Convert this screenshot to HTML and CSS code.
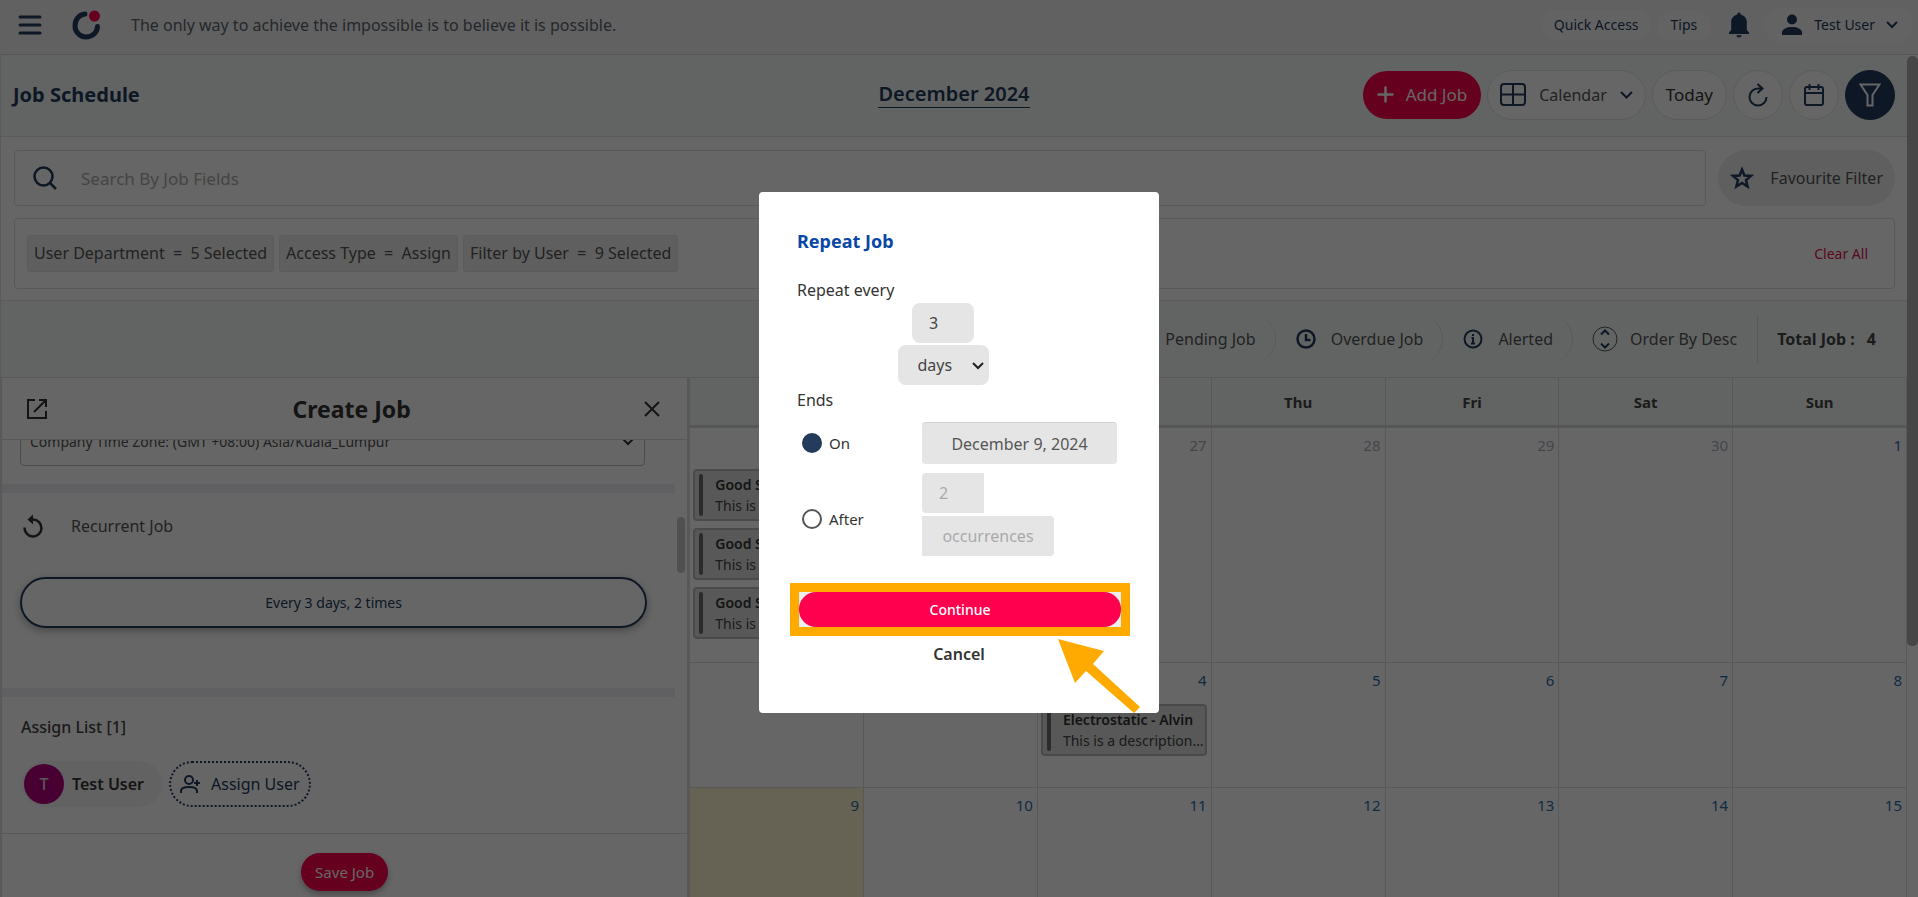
FILE: index.html
```html
<!DOCTYPE html>
<html lang="en">
<head>
<meta charset="utf-8">
<title>Job Schedule</title>
<link rel="stylesheet" href="styles.css">
</head>
<body>
<div class="app">
  <header class="topbar">
    <button class="icon-btn menu" aria-label="Menu"><svg width="24" height="20" viewBox="0 0 24 20" stroke="currentColor" stroke-width="3" stroke-linecap="round"><path d="M2 2h20M2 10h20M2 18h20"/></svg></button>
    <svg class="logo" width="32" height="32" viewBox="0 0 32 32" fill="none"><path d="M14 5C7.500 5.500 4 11 4 17a11 11 0 0 0 11 11c6 0 11-4 11.500-10.500" stroke="#243b5c" stroke-width="5" stroke-linecap="round"/><circle cx="23.500" cy="7" r="5.500" fill="#ff004f"/></svg>
    <p class="quote">The only way to achieve the impossible is to believe it is possible.</p>
    <nav class="topnav">
      <button class="pill">Quick Access</button>
      <button class="pill tips">Tips</button>
      <button class="icon-btn bell" aria-label="Notifications"><svg width="22" height="26" viewBox="0 0 22 26" fill="currentColor"><path d="M11 0.500c1.100 0 1.700.8 1.700 1.900C16 3.200 18.800 6 18.800 10v8l2.200 2.500v1.500H1V20.500L3.200 18V10c0-4 2.800-6.800 6.100-7.600C9.300 1.300 9.900.5 11 .5zM8.500 23.200h5c0 1.300-1.100 2.300-2.500 2.300s-2.500-1-2.500-2.300z"/></svg></button>
      <button class="pill user"><svg width="22" height="22" viewBox="0 0 22 22" fill="currentColor"><circle cx="11" cy="5.500" r="5"/><path d="M1 21v-2.500C1 15 6 13 11 13s10 2 10 5.500V21z"/></svg><span>Test User</span><svg width="12" height="8" viewBox="0 0 12 8" fill="none" stroke="currentColor" stroke-width="2"><path d="M1 1l5 5 5-5"/></svg></button>
    </nav>
  </header>

  <main class="page">
    <section class="titlebar">
      <h1>Job Schedule</h1>
      <button class="month">December 2024</button>
      <div class="actions">
        <button class="add"><svg width="17" height="17" viewBox="0 0 17 17" stroke="currentColor" stroke-width="2.500" stroke-linecap="round"><path d="M8.500 1.500v14M1.500 8.500h14"/></svg>Add Job</button>
        <button class="round view"><svg width="26" height="23" viewBox="0 0 26 23" fill="none" stroke="#243b5c" stroke-width="2"><rect x="1" y="1" width="24" height="21" rx="3"/><path d="M13 1v21M1 11.500h24"/></svg><span>Calendar</span><svg width="13" height="8" viewBox="0 0 13 8" fill="none" stroke="#243b5c" stroke-width="2"><path d="M1 1l5.500 5.500L12 1"/></svg></button>
        <button class="round today">Today</button>
        <button class="round circle" aria-label="Refresh"><svg width="20" height="24" viewBox="0 0 20 24" fill="none" stroke="#243b5c" stroke-width="2"><path d="M18.500 14A8.500 8.500 0 1 1 10 5.500h4M9.500 1l5 4.500-5 4.500"/></svg></button>
        <button class="round circle" aria-label="Pick date"><svg width="20" height="24" viewBox="0 0 20 24" fill="none" stroke="#243b5c" stroke-width="2"><rect x="1" y="4" width="18" height="18" rx="2"/><path d="M1 10h18M5.500 1v6M14.500 1v6"/></svg></button>
        <button class="round circle filter" aria-label="Filter"><svg width="22" height="24" viewBox="0 0 22 24" fill="none" stroke="currentColor" stroke-width="2"><path d="M1.500 1.500h19L13.500 12v10.500h-5V12z"/></svg></button>
      </div>
    </section>

    <section class="filters">
      <div class="search-row">
        <label class="search"><svg width="24" height="24" viewBox="0 0 24 24" fill="none" stroke="#243b5c" stroke-width="2.500"><circle cx="10.500" cy="10.500" r="9"/><path d="M17 17l6 6"/></svg><input type="text" placeholder="Search By Job Fields" aria-label="Search By Job Fields"></label>
        <button class="fav"><svg width="24" height="24" viewBox="0 0 24 24" fill="none" stroke="#243b5c" stroke-width="2.500"><path d="M12 3.500l2.400 6 6.600.4-5 4.200 1.600 6.400-5.600-3.500-5.600 3.500L8 14.100 3 9.900l6.600-.4z"/></svg>Favourite Filter</button>
      </div>
      <div class="chips">
        <span class="chip">User Department&nbsp; =&nbsp; 5 Selected</span>
        <span class="chip">Access Type&nbsp; =&nbsp; Assign</span>
        <span class="chip">Filter by User&nbsp; =&nbsp; 9 Selected</span>
        <button class="clear">Clear All</button>
      </div>
    </section>

    <section class="status">
      <span class="stat">Pending Job</span>
      <span class="stat"><svg width="20" height="20" viewBox="0 0 20 20" fill="none" stroke="#243b5c" stroke-width="2.500"><circle cx="10" cy="10" r="8.500"/><path d="M10 5v6h4.500"/></svg>Overdue Job</span>
      <span class="stat"><svg width="20" height="20" viewBox="0 0 20 20" fill="none" stroke="#243b5c" stroke-width="2"><circle cx="10" cy="10" r="8.500"/><path d="M10 5v2M8.500 9H10v5.500M8 14.500h4"/></svg>Alerted</span>
      <button class="order"><svg width="26" height="26" viewBox="0 0 26 26" fill="none" stroke="#243b5c"><circle cx="13" cy="13" r="12" stroke="#555"/><path d="M9 8.500l4-4 4 4M9 17.500l4 4 4-4" stroke-width="2"/></svg>Order By Desc</button>
      <strong class="total">Total Job :<span>4</span></strong>
    </section>

    <div class="board">
      <aside class="panel">
        <header class="panel-head">
          <button class="icon-btn" aria-label="Open in new window"><svg width="20" height="20" viewBox="0 0 20 20" fill="none" stroke="#333" stroke-width="2"><path d="M8 1H1v18h18v-7M12 1h7v7M19 1L7 13"/></svg></button>
          <h2>Create Job</h2>
          <button class="icon-btn" aria-label="Close"><svg width="16" height="16" viewBox="0 0 16 16" stroke="#333" stroke-width="2"><path d="M1 1l14 14M15 1L1 15"/></svg></button>
        </header>
        <div class="panel-scroll">
          <div class="panel-body">
            <button class="zone"><span>Company Time Zone: (GMT +08:00) Asia/Kuala_Lumpur</span><svg width="14" height="9" viewBox="0 0 14 9" fill="none" stroke="#333" stroke-width="2"><path d="M1 1l6 6 6-6"/></svg></button>
            <div class="band"></div>
            <div class="recur"><svg width="20" height="24" viewBox="0 0 20 24" fill="none" stroke="#333" stroke-width="2.500"><path d="M1.500 13.500A8.500 8.500 0 1 0 10 5.500"/><path d="M10 .5v10L4.500 5.500z" fill="#333" stroke="none"/></svg>Recurrent Job</div>
            <button class="repeat">Every 3 days, 2 times</button>
            <div class="band"></div>
            <h3>Assign List [1]</h3>
            <div class="people">
              <span class="person"><span class="avatar">T</span>Test User</span>
              <button class="assign"><svg width="20" height="18" viewBox="0 0 20 18" fill="none" stroke="#243b5c" stroke-width="2"><circle cx="9" cy="5" r="4"/><path d="M1 18v-2c0-3 3-4 8-4s8 1 8 4v2M17 5v6M14 8h6"/></svg>Assign User</button>
            </div>
          </div>
          <div class="panel-thumb"></div>
        </div>
        <footer class="panel-foot"><button class="save">Save Job</button></footer>
      </aside>

      <table class="calendar">
        <thead><tr><th>Mon</th><th>Tue</th><th>Wed</th><th>Thu</th><th>Fri</th><th>Sat</th><th>Sun</th></tr></thead>
        <tbody>
          <tr class="tall muted"><td><span class="day">25</span>
            <div class="job"><b>Good Service - Alvin</b><span>This is a description of the job</span></div>
            <div class="job"><b>Good Service - Alvin</b><span>This is a description of the job</span></div>
            <div class="job"><b>Good Service - Alvin</b><span>This is a description of the job</span></div></td>
            <td><span class="day">26</span></td><td><span class="day">27</span></td><td><span class="day">28</span></td><td><span class="day">29</span></td><td><span class="day">30</span></td><td class="current"><span class="day">1</span></td></tr>
          <tr class="short"><td><span class="day">2</span></td><td><span class="day">3</span></td><td><span class="day">4</span><div class="job"><b>Electrostatic - Alvin</b><span>This is a description of the job</span></div></td><td><span class="day">5</span></td><td><span class="day">6</span></td><td><span class="day">7</span></td><td><span class="day">8</span></td></tr>
          <tr class="short"><td class="now"><span class="day">9</span></td><td><span class="day">10</span></td><td><span class="day">11</span></td><td><span class="day">12</span></td><td><span class="day">13</span></td><td><span class="day">14</span></td><td><span class="day">15</span></td></tr>
        </tbody>
      </table>
    </div>
  </main>
  <div class="page-scroll"></div>
</div>

<div class="overlay">
  <form class="dialog" role="dialog" aria-labelledby="repeat-title">
    <h2 id="repeat-title">Repeat Job</h2>
    <label class="line" for="every">Repeat every</label>
    <div class="every">
      <input id="every" class="field number" type="text" value="3">
      <div class="unit-box"><select class="field unit" aria-label="Unit"><option>days</option></select><svg class="caret" width="12" height="8" viewBox="0 0 12 8" fill="none" stroke="#222" stroke-width="2"><path d="M1 1l5 5 5-5"/></svg></div>
    </div>
    <p class="line ends">Ends</p>
    <div class="choice">
      <label><input type="radio" name="ends" checked>On</label>
      <input class="field date" type="text" value="December 9, 2024" aria-label="End date">
    </div>
    <div class="choice after">
      <label><input type="radio" name="ends">After</label>
      <div class="times"><input class="field count" type="text" value="2" aria-label="Occurrences" disabled><span class="field suffix">occurrences</span></div>
    </div>
    <div class="confirm"><button type="button" class="continue">Continue</button>
      <svg class="arrow" width="84" height="76" viewBox="0 0 84 76"><path d="M1 1L47 13 36 26 83 69 77 75 29 33 18 45z" fill="#fa0"/></svg></div>
    <button type="button" class="cancel">Cancel</button>
  </form>
</div>
</body>
</html>
```
FILE: styles.css
```css
* { box-sizing: border-box; }
body { margin: 0; font-family: "Noto Sans", "Open Sans", sans-serif; font-size: 16px; color: #555; }
button, input, select { font: inherit; color: inherit; }
button { border: 0; background: none; padding: 0; cursor: pointer; white-space: nowrap; }
h1, h2, h3, p { margin: 0; }
svg { flex: none; display: block; }

.app { height: 100vh; overflow: hidden; display: grid; grid-template: 55px minmax(0, 1fr) / minmax(0, 1fr) 11px; background: #fff; }
.topbar { grid-column: 1 / -1; display: flex; align-items: center; background: #f3f3f3; border-bottom: 1px solid #d5d9da; padding: 0 5px 5px 18px; color: #243b5c; }
.logo { margin-left: 29px; }
.quote { margin-left: 28px; color: #5b6470; font-size: 16px; }
.topnav { margin-left: auto; display: flex; align-items: center; gap: 6px; font-size: 14px; }
.pill { background: #f8f8f8; border-radius: 18px; height: 30px; padding: 0 12px; }
.tips { padding: 0 14px; }
.bell { margin: 0 8px 0 11px; }
.user { height: 36px; display: flex; align-items: center; gap: 11px; padding: 0 15px 0 17px; }

.page { border-left: 1px solid #e2e2e2; display: flex; flex-direction: column; min-height: 0; overflow: hidden; }
.titlebar { height: 82px; flex: none; display: grid; grid-template-columns: 1fr auto 1fr; align-items: center; padding: 0 12px 2px; background: #f6fbf8; border-bottom: 1px solid #e2e2e2; color: #243b5c; }
h1 { font-size: 20px; }
.month { font-size: 20px; font-weight: 600; line-height: 26px; border-bottom: 1px solid #243b5c; }
.actions { display: flex; justify-content: flex-end; align-items: center; gap: 6px; font-size: 17px; }
.add { height: 48px; border-radius: 24px; background: #ff004f; color: #fff; display: flex; align-items: center; gap: 12px; padding: 0 14px; }
.round { height: 50px; border-radius: 25px; background: #fff; border: 1px solid #e2e2e2; display: flex; align-items: center; justify-content: center; }
.view { gap: 13px; padding: 0 12px; font-size: 16px; color: #555; }
.today { padding: 0 13px; color: #333; }
.circle { width: 50px; }
.filter { background: #243b5c; border-color: #243b5c; color: #fff; }

.filters { flex: none; padding: 13px 12px 11px 13px; display: grid; gap: 12px; border-bottom: 1px solid #e2e2e2; }
.search-row { display: flex; gap: 12px; }
.search { flex: 1; height: 56px; border: 1px solid #ddd; border-radius: 4px; display: flex; align-items: center; gap: 24px; padding: 0 18px; }
.search input { flex: 1; border: 0; outline: 0; background: none; padding: 0; font-size: 17px; }
.search input::placeholder { color: #aaa; }
.fav { height: 56px; border-radius: 28px; background: #ededed; display: flex; align-items: center; gap: 16px; padding: 0 12px; }
.chips { height: 71px; border: 1px solid #ddd; border-radius: 4px; display: flex; align-items: center; gap: 5px; padding: 0 12px; font-size: 16px; }
.chip { height: 37px; line-height: 35px; padding: 0 6px; background: #ededed; border: 1px solid #e3e3e3; border-radius: 3px; }
.clear { margin-left: auto; padding: 0 14px; font-size: 14px; color: #e0144f; }

.status { height: 76px; flex: none; background: #f6fbf8; display: flex; justify-content: flex-end; align-items: center; padding-right: 31px; }
.stat { height: 48px; display: flex; align-items: center; gap: 15px; padding: 0 19px 0 20px; border-right: 1px solid #ddd; border-radius: 0 24px 24px 0; }
.order { height: 48px; display: flex; align-items: center; gap: 12px; padding: 0 20px 0 19px; border-right: 1px solid #ddd; }
.total { display: flex; gap: 12px; padding-left: 19px; font-size: 16px; color: #444; }

.board { flex: 1; min-height: 0; display: grid; grid-template: minmax(0, 1fr) / minmax(0, 65fr) minmax(0, 115fr); align-items: start; }
.panel { height: 100%; display: flex; flex-direction: column; border: 1px solid #ddd; border-width: 1px 2px 0 1px; }
.panel-head { height: 62px; flex: none; border-bottom: 1px solid #ddd; display: flex; align-items: center; justify-content: space-between; padding: 0 27px 0 25px; }
.panel-head h2 { font-size: 23px; color: #333; padding-left: 12px; }
.panel-scroll { flex: 1; min-height: 0; display: flex; overflow: hidden; }
.panel-body { flex: 1; min-width: 0; display: flex; flex-direction: column; justify-content: flex-end; padding-bottom: 26px; }
.panel-thumb { width: 8px; height: 56px; margin: 77px 2px 0; border-radius: 4px; background: #c8c8c8; }
.zone { height: 50px; flex: none; margin: 0 30px 18px 18px; border: 1px solid #bbb; border-radius: 4px; display: flex; align-items: center; justify-content: space-between; padding: 0 9px; font-size: 14px; }
.band { height: 9px; flex: none; background: #f0f0f4; }
.recur { display: flex; align-items: center; gap: 28px; padding: 21px 21px 27px; }
.repeat { height: 51px; flex: none; margin: 12px 28px 60px 18px; border: 2px solid #243b5c; border-radius: 26px; font-size: 14px; color: #243b5c; box-shadow: 0 3px 8px rgba(0,0,0,.3); }
.panel h3 { font-size: 16px; font-weight: 500; line-height: 22px; color: #444; margin: 19px 19px 23px; }
.people { display: flex; gap: 7px; padding: 0 20px; font-size: 16px; }
.person { height: 46px; border-radius: 23px; background: #f5f5f5; display: flex; align-items: center; gap: 8px; padding: 0 18px 0 2px; font-weight: 600; color: #333; }
.avatar { width: 40px; height: 40px; border-radius: 50%; background: #b5007f; color: #ddd; display: grid; place-items: center; font-weight: 500; }
.assign { height: 46px; border: 2px dotted #243b5c; border-radius: 23px; display: flex; align-items: center; gap: 11px; padding: 0 9px; color: #243b5c; }
.panel-foot { height: 64px; flex: none; border-top: 1px solid #ddd; display: flex; justify-content: center; align-items: center; padding-top: 12px; }
.save { height: 38px; border-radius: 19px; background: #ff004f; color: #fff; padding: 0 14px; font-size: 15px; box-shadow: 0 3px 6px rgba(0,0,0,.3); }

.calendar { width: 100%; border-collapse: collapse; table-layout: fixed; }
.calendar th { height: 49px; background: #f6fbf8; border: 1px solid #ddd; border-bottom: 3px solid #d5d8d8; font-size: 15px; color: #444; }
.calendar td { border: 1px solid #ddd; vertical-align: top; padding: 0 4px 0 3px; font-size: 15px; }
.tall { height: 236px; }
.short { height: 125px; }
.day { display: block; text-align: right; line-height: 35px; margin-bottom: 6px; color: #2c6cad; }
.muted .day { color: #a5b0bb; }
.muted .current .day { color: #2c6cad; }
.now { background: #fff6d2; }
.job { height: 52px; margin-bottom: 7px; background: #dcdcdc; border: 2px solid #b9b9b9; border-radius: 4px; overflow: hidden; display: grid; grid-template-columns: 4px minmax(0, 1fr); column-gap: 12px; padding: 3px 0 3px 4px; font-size: 14px; line-height: 21px; color: #444; }
.job::before { content: ""; grid-row: 1 / 3; background: #6b6b6b; border-radius: 2px; }
.job b, .job span { overflow: hidden; text-overflow: ellipsis; white-space: nowrap; }
.job b { font-weight: 600; color: #333; }
.page-scroll { height: 590px; margin-top: 1px; border-radius: 5px; background: #b0b0b0; }

.overlay { position: fixed; inset: 0; background: rgba(0,0,0,.6); display: grid; place-items: center; }
.dialog { width: 400px; background: #fff; border-radius: 4px; margin-top: 8px; padding: 36px 38px 48px; display: flex; flex-direction: column; color: #333; font-size: 16px; }
.dialog h2 { font-size: 18px; line-height: 26px; color: #0747a6; }
.line { line-height: 22px; margin-top: 25px; }
.every { display: grid; justify-items: center; gap: 2px; padding-right: 32px; margin-top: 2px; }
.field { border: 0; background: #e5e5e5; height: 40px; font-size: 16px; color: #444; }
.number { width: 62px; border-radius: 8px; padding: 0 17px; }
.unit-box { position: relative; display: grid; }
.unit { appearance: none; width: 91px; border-radius: 8px; padding: 0 0 0 20px; }
.caret { position: absolute; right: 5px; top: 17px; pointer-events: none; }
.ends { margin-top: 4px; }
.choice { display: grid; grid-template-columns: 125px minmax(0, 1fr); align-items: center; margin-top: 11px; }
.choice label { display: flex; align-items: center; gap: 7px; font-size: 15px; }
.choice input[type="radio"] { appearance: none; width: 20px; height: 20px; margin: 0 0 0 5px; border: 2px solid #555; border-radius: 50%; }
.choice input[type="radio"]:checked { background: #243b5c; border-color: #243b5c; }
.date { width: 195px; height: 42px; border-radius: 4px; text-align: center; color: #555; border-top: 1px solid #d0d0d0; }
.after { margin-top: 9px; }
.after label { padding-top: 8px; }
.times { display: grid; gap: 3px; justify-items: start; }
.count { width: 62px; border-radius: 4px 0 0 4px; padding: 0 17px; color: #aaa; }
.suffix { width: 132px; border-radius: 0 4px 4px 0; line-height: 40px; text-align: center; color: #aaa; }
.confirm { position: relative; margin: 27px -9px 0 -7px; border: 9px solid #fa0; display: grid; background: #eee; }
.continue { height: 35px; border-radius: 17px; background: #ff004f; color: #fff; font-size: 14px; font-weight: 500; }
.arrow { position: absolute; right: -20px; top: 46px; }
.cancel { align-self: center; margin-top: 7px; line-height: 22px; font-weight: 600; font-size: 16px; }
```
